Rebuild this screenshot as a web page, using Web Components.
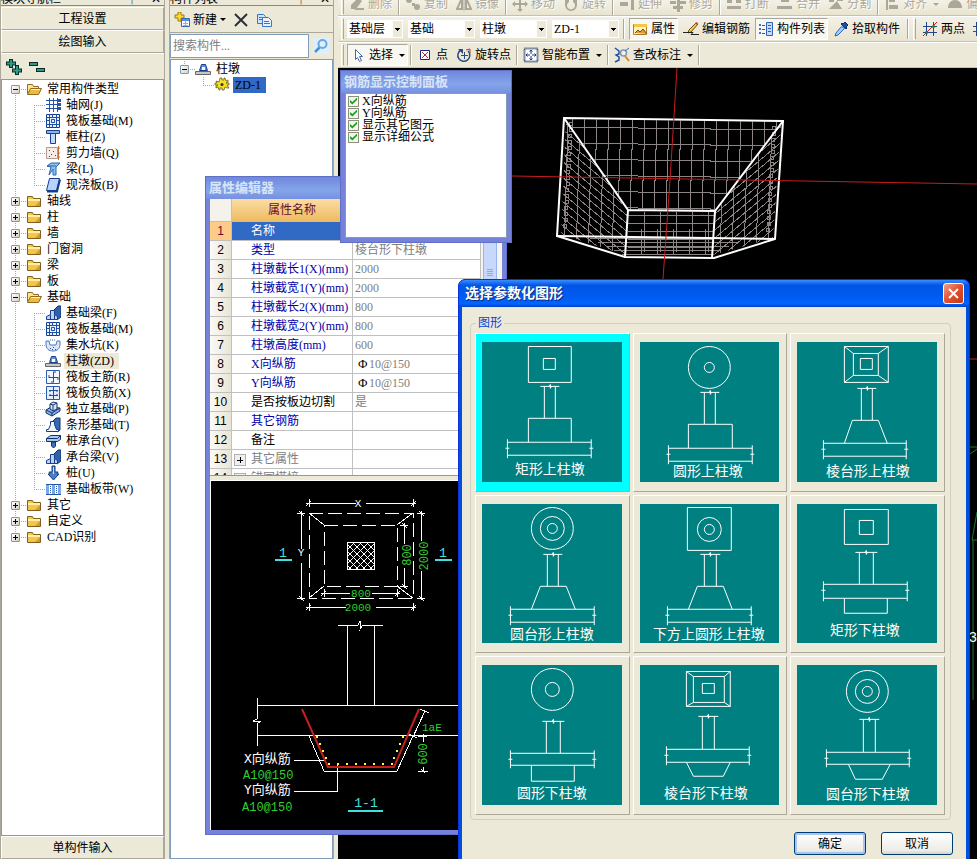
<!DOCTYPE html>
<html lang="zh-CN">
<head>
<meta charset="UTF-8">
<meta name="viewport" content="width=device-width, initial-scale=1">
<title>选择参数化图形</title>
<style>
    :root {
        --face: #ece9d8;
        --line: #aca899;
        --field-border: #7f9db9;
        --select: #316ac5;
    }
    body {
        margin: 0;
        font: 12px/16px "Liberation Serif", "Noto Sans CJK SC", sans-serif;
        color: #000;
    }
    /* floating windows on the desktop */
    .property-window { position: absolute; left: 205px; top: 176px; bottom: 24px; width: 302px; z-index: 1; }
    .rebar-window { position: absolute; left: 340px; top: 70px; width: 172px; height: 173px; z-index: 2; }
    .shape-window { position: absolute; left: 458px; top: 279px; width: 512px; z-index: 3; }
</style>
</head>
<body>
<app-workspace>
    <side-panel slot="nav" heading="模块导航栏">
        <nav-button slot="top">工程设置</nav-button>
        <nav-button slot="top">绘图输入</nav-button>
        <tree-tools slot="top"></tree-tools>
        <tree-view>
            <tree-item label="常用构件类型" icon="folderOpen" open>
                <tree-item label="轴网(J)" icon="axis"></tree-item>
                <tree-item label="筏板基础(M)" icon="raft"></tree-item>
                <tree-item label="框柱(Z)" icon="column"></tree-item>
                <tree-item label="剪力墙(Q)" icon="wall"></tree-item>
                <tree-item label="梁(L)" icon="beam"></tree-item>
                <tree-item label="现浇板(B)" icon="slab"></tree-item>
            </tree-item>
            <tree-item label="轴线" icon="folder" closed></tree-item>
            <tree-item label="柱" icon="folder" closed></tree-item>
            <tree-item label="墙" icon="folder" closed></tree-item>
            <tree-item label="门窗洞" icon="folder" closed></tree-item>
            <tree-item label="梁" icon="folder" closed></tree-item>
            <tree-item label="板" icon="folder" closed></tree-item>
            <tree-item label="基础" icon="folderOpen" open>
                <tree-item label="基础梁(F)" icon="foundBeam"></tree-item>
                <tree-item label="筏板基础(M)" icon="raft"></tree-item>
                <tree-item label="集水坑(K)" icon="pit"></tree-item>
                <tree-item label="柱墩(ZD)" icon="pier" current></tree-item>
                <tree-item label="筏板主筋(R)" icon="mainBar"></tree-item>
                <tree-item label="筏板负筋(X)" icon="negBar"></tree-item>
                <tree-item label="独立基础(P)" icon="isolated"></tree-item>
                <tree-item label="条形基础(T)" icon="strip"></tree-item>
                <tree-item label="桩承台(V)" icon="pileCap"></tree-item>
                <tree-item label="承台梁(V)" icon="foundBeam"></tree-item>
                <tree-item label="桩(U)" icon="pile"></tree-item>
                <tree-item label="基础板带(W)" icon="band"></tree-item>
            </tree-item>
            <tree-item label="其它" icon="folder" closed></tree-item>
            <tree-item label="自定义" icon="folder" closed></tree-item>
            <tree-item label="CAD识别" icon="folder" closed></tree-item>
        </tree-view>
        <nav-button slot="bottom">单构件输入</nav-button>
    </side-panel>

    <side-panel slot="list" heading="构件列表">
        <list-tools slot="top"></list-tools>
        <tree-view>
            <tree-item label="柱墩" icon="pier" open>
                <tree-item label="ZD-1" icon="gear" selected></tree-item>
            </tree-item>
        </tree-view>
    </side-panel>

    <main-toolbars slot="tools"></main-toolbars>
    <model-view slot="view"></model-view>

    <float-window slot="windows" class="property-window" heading="属性编辑器">
        <property-grid></property-grid>
        <section-preview></section-preview>
    </float-window>

    <float-window slot="windows" class="rebar-window" heading="钢筋显示控制面板">
        <check-list>
            <check-row>X向纵筋</check-row>
            <check-row>Y向纵筋</check-row>
            <check-row>显示其它图元</check-row>
            <check-row>显示详细公式</check-row>
        </check-list>
    </float-window>

    <float-window slot="windows" class="shape-window" heading="选择参数化图形" active>
        <shape-picker></shape-picker>
    </float-window>
</app-workspace>

<script>
const ICONS = {
    folder: '<path d="M1.5 3.5h5l1 2h7v8h-13z" fill="#f3c548" stroke="#7d6022"/><path d="M2 6h12v2H2z" fill="#fff0a8"/><path d="M9 13l5-5v5z" fill="#d89a28"/>',
    folderOpen: '<path d="M1.5 12.5v-9h5l1 2h5v3" fill="#ffe792" stroke="#8d6b28"/><path d="M1.5 13.5l3-6h11l-3 6z" fill="#f1b93c" stroke="#8d6b28"/><path d="M5 8.500h9" stroke="#fff2b5"/>',
    axis: '<path d="M1 3.500h14M1 7.500h14M1 11.500h14M4.500 1v14M8.500 1v14M12.500 1v14" stroke="#2454a8" fill="none"/><path d="M13 2h3v3h-3zM13 6h3v3h-3zM13 10h3v3h-3z" fill="#2454a8"/>',
    raft: '<path d="M1.500 1.500h13v13h-13z" fill="#eaf2ff" stroke="#123e90"/><path d="M1 4.500h14M1 11.500h14M4.500 1v14M11.500 1v14M7.500 1v3M7.500 12v3M1 7.500h3M12 7.500h3" stroke="#1b4fa8"/><path d="M6.500 6.500h3v3h-3z" fill="none" stroke="#1b4fa8"/>',
    column: '<path d="M1.500 1.500h13v3h-13z" fill="#8ab4f0" stroke="#173f91"/><path d="M5.500 4.500h5v10h-5z" fill="#c4dafb" stroke="#173f91"/>',
    wall: '<path d="M1.500 2.500h11v11h-11z" fill="#f6ebe6" stroke="#b59a92"/><path d="M4 5h1v1H4zM8 6h1v1H8zM6 9h1v1H6zM10 10h1v1h-1zM4 11h1v1H4z" fill="#a02020"/><path d="M13.500 1v14M13 3h2M13 8h2M13 12h2" stroke="#c07030"/>',
    beam: '<path d="M2 5l4-3h9l-4 4v8H8V8L4 14l2-8z" fill="#8fc0e8" stroke="#2866b4"/><path d="M2 5h9" stroke="#2866b4"/>',
    slab: '<path d="M4.500 1.500h10l-3 12h-10z" fill="#b8d3fb" stroke="#153e91"/><path d="M2 14.500h10l3-12" fill="none" stroke="#153e91" stroke-width="2"/>',
    foundBeam: '<path d="M8 6l5-5h3v11l-4 3z" fill="#2e62ad" stroke="#12336f"/><path d="M1.500 14.500v-3l4-2v-4h4v4l3 2v3z" fill="#b9d2f5" stroke="#173f91"/><path d="M5.500 10v4M9.500 10v4" stroke="#173f91"/>',
    pit: '<path d="M1 4h3l1 4h6l1-4h3v3c0 5-3 7-7 7s-7-2-7-7z" fill="#dbe7f8" stroke="#4b7bc0"/><path d="M5 3h6" stroke="#3c6cb8" stroke-dasharray="1 1"/><path d="M5 11h1v1H5zM8 10h1v1H8zM10 12h1v1h-1zM7 12h1v1H7z" fill="#2d57a0"/>',
    pier: '<path d="M6.500 3.500h4l2 6h-8z" fill="#5f90d8" stroke="#173f91"/><path d="M7 6h3v3H7z" fill="#fff"/><path d="M.500 10.500h15v3H.500z" fill="#c8c8c8" stroke="#666"/>',
    mainBar: '<path d="M1.500 1.500h13v13h-13z" fill="#f2f7ff" stroke="#2b5bb0"/><path d="M4 8.500h9M8.500 3v10M4 6v3M13 8v3M8 3h3M6 13h3" stroke="#1f4e9e"/>',
    negBar: '<path d="M1.500 1.500h13v13h-13z" fill="#e4eefc" stroke="#2b5bb0"/><path d="M4 5.500h9M4 10.500h9M8.500 2v12M5 5v2M12 5v2M5 9v2M12 9v2" stroke="#1f4e9e"/>',
    isolated: '<path d="M1 9l5-3 9 1v3l-8 5-6-3z" fill="#8cb2e8" stroke="#12336f"/><path d="M5 3l3-2 4 1v6l-4 2-3-2z" fill="#d4e4fb" stroke="#12336f"/><path d="M8 4v6M1 9l6 3 8-5M7 12v3M5 3l3 1 4-2" fill="none" stroke="#12336f"/>',
    strip: '<path d="M8 4l3-3h4v12l-3 2z" fill="#356ab5" stroke="#12336f"/><path d="M1.500 14.500v-2h2l2-5v-3h4v3l2 5h2v2z" fill="#eef5ff" stroke="#173f91"/>',
    pileCap: '<path d="M1.500 5.500l4-3h10v4l-3 2h-11z" fill="#a8c7f2" stroke="#12336f"/><path d="M1.500 5.500h11l3-3" fill="none" stroke="#12336f"/><path d="M6.500 9h4v4l-2 2-2-2z" fill="#3d70ba" stroke="#12336f"/>',
    pile: '<path d="M7 1h3v6h3l-1 2h2l-5.500 6L3 9h2L4 7h3z" fill="#4d7ec4" stroke="#143b80"/><path d="M8 2h1v7H8z" fill="#cfe0fa"/>',
    band: '<path d="M1 3.500h15M1 13.500h15" stroke="#2454a8"/><path d="M1 4h3v9H1zM7 4h3v9H7zM13 4h3v9h-3z" fill="#7ca7e4"/><path d="M5.500 5v8M11.500 5v8" stroke="#2454a8" stroke-dasharray="1 1"/>',
    gear: '<path d="M6 1h2v2h2V1h1l1 3 2-1v2l-2 1h3v2h-2l2 3h-2l-2-1-1 3H8v-2H6v2H5l-1-3-2 1V9l2-1H1V6h2L2 4l3 1z" fill="#f5e228" stroke="#5c5200" stroke-width=".7"/><circle cx="8" cy="7.500" r="1.500" fill="#333"/>',
    create: '<path d="M4 0h3v3h3v3H7v3H4V6H1V3h3z" fill="#ffd938" stroke="#a07800"/><path d="M7.500 6.500h8v8h-8z" fill="#fff" stroke="#3b68b5"/><path d="M8 7h7v2H8z" fill="#5b8ee0"/><path d="M9 11.500h5M9 13.500h5M11.500 9v5" stroke="#8fb0e6"/>',
    remove: '<path d="M2 2l12 12M14 2L2 14" stroke="#2c3038" stroke-width="2" fill="none"/>',
    copy: '<path d="M1.500 2.500h6l2 2v7h-8z" fill="#cfe4fc" stroke="#3877c4"/><path d="M6.500 5.500h6l3 3v6h-9z" fill="#e6f2ff" stroke="#3877c4"/><path d="M3 5.500h3M3 7.500h3M8 9.500h5M8 11.500h6" stroke="#3877c4"/>',
    search: '<circle cx="9.500" cy="6" r="4" fill="#d9f0ff" stroke="#6aa8dc" stroke-width="2"/><path d="M6.500 9.500L2 14" stroke="#4a8fd0" stroke-width="2.500"/>',
    expand: '<path d="M5 0v9M0 4.500h10" stroke="#0a2c28" stroke-width="4"/><path d="M11 6v10M6 11.500h10" stroke="#0a2c28" stroke-width="4"/><path d="M5 1v7M1 4.500h8M11 7v8M7 11.500h8" stroke="#2c9a86" stroke-width="2"/>',
    collapse: '<path d="M0 5h9M7 11h9" stroke="#0a2c28" stroke-width="4"/><path d="M1 5h7M8 11h7" stroke="#2c9a86" stroke-width="2"/>',
    property: '<path d="M1.500 3.500h5l1 2h7v8h-13z" fill="#fff4b8" stroke="#a38235"/><path d="M2 3h13v3H2z" fill="#f3c548"/><path d="M3 12l3-3 2 2 3-3 4 5" fill="#e69a3c" stroke="#73461e"/>',
    pencil: '<path d="M6 9l7-7 2 1-7 8-3 1z" fill="#f1cf52" stroke="#6b4a10"/><path d="M12 2l2-1 1 2-1 1z" fill="#d04040"/><path d="M0 11.500h10l-2 2h8" fill="none" stroke="#222"/>',
    list: '<path d="M1 3h2v2H1zM1 7h2v2H1zM1 11h2v2H1z" fill="#4577c5"/><path d="M4 4.500h3M4 8.500h3M4 12.500h3" stroke="#555"/><path d="M8.500 1.500h6v13h-6z" fill="#c4dafb" stroke="#2f61b4"/><path d="M10 4.500h3M10 7.500h3M10 10.500h3" stroke="#2f61b4"/>',
    dropper: '<path d="M10 3l2-2 3 3-2 2 1 1-1 1-5-5 1-1z" fill="#1c4fa8" stroke="#0f2e6e"/><path d="M8.500 5.500l3 2L5 14l-3 1 1-3z" fill="#9fd0ff" stroke="#2b64b8"/>',
    twoPoint: '<path d="M4.500 1v14M11.500 1v14M1 5.500h14M1 11.500h14" stroke="#1b4790"/><path d="M1 15L15 1" stroke="#c02020"/><circle cx="4.500" cy="11.500" r="1.500" fill="#287a28"/><circle cx="11.500" cy="5.500" r="1.500" fill="#287a28"/>',
    parallel: '<path d="M4.500 1v14M11.500 1v14M1 5.500h14" stroke="#1b4790"/><path d="M1 10.500h14" stroke="#c02020"/>',
    cursor: '<path d="M5.500 2.500v10l2-2 2 4 2-1-2-4h3z" fill="#fff" stroke="#4a66a0"/>',
    point: '<path d="M3.500 3.500h9v9h-9z" fill="#fff" stroke="#152d78"/><path d="M5 5l6 6M11 5l-6 6" stroke="#b02040"/>',
    rotatePoint: '<path d="M5 3a6 6 0 1 0 7 1" fill="none" stroke="#2d4a80" stroke-width="1.500"/><path d="M2 2h5v5z" fill="#2d4a80"/><path d="M8.500 5v7M5 8.500h7" stroke="#2d4a80"/><path d="M10 3l4-1v4" fill="none" stroke="#c03030"/>',
    smart: '<path d="M1.500 1.500h13v13h-13z" fill="#fff" stroke="#152d58" stroke-width="2" stroke-dasharray="1 1"/><path d="M8 3v4M8 9v4M3 8h4M9 8h4" stroke="#17377c"/><path d="M6.500 4.500L8 3l1.500 1.500M6.500 11.500L8 13l1.500-1.500M4.500 6.500L3 8l1.500 1.500M11.500 6.500L13 8l-1.500 1.500" fill="none" stroke="#17377c"/>',
    inspect: '<path d="M1 1l4 3v3L2 8l3 2v3l-4 2" fill="none" stroke="#1f4fa8" stroke-width="1.500"/><circle cx="9.500" cy="6" r="3" fill="#e4f4ff" stroke="#8a97a8" stroke-width="1.500"/><path d="M11 9l4 5" stroke="#d08a28" stroke-width="2"/><path d="M11 4l4-3" stroke="#2f6cc0"/>',
    gErase: '<path d="M2 9l7-7 4 3-6 8H2z"/><path d="M8 12h7v2H5z"/>',
    gCopy: '<circle cx="4" cy="4" r="3"/><path d="M7 7h3v3H7z"/><circle cx="12" cy="11" r="3"/>',
    gMirror: '<path d="M6 2v11H1zM10 2v11h5z" fill="none" stroke="#aca899" stroke-width="2"/><path d="M8 0v15" stroke="#aca899"/>',
    gMove: '<path d="M8 0l3 3H9v4h4V5l3 3-3 3V9H9v4h2l-3 3-3-3h2V9H3v2L0 8l3-3v2h4V3H5z"/>',
    gRotate: '<path d="M2 3h4v3a4 4 0 1 0 4 0V3h4v6a6 6 0 0 1-12 0z"/>',
    gExtend: '<path d="M1 6h8v4H1zM12 1h3v13h-3z"/>',
    gTrim: '<path d="M0 5h6v3H0zM10 5h6v3h-6zM3 10h10v3H3zM7 2h3v14H7z"/>',
    gBreak: '<path d="M1 4h5v3H1zM10 4h5v3h-5zM1 10h14v3H1z"/>',
    gMerge: '<path d="M4 3h8v3H4zM0 10h15v3H0z"/>',
    gSplit: '<path d="M1 2h5v4H1zM9 2h6v3H9zM1 13l8-8 5 8z"/>',
    gAlign: '<path d="M2 1h2v13H2zM5 3h6v3H5zM5 9h9v4H5z"/>',
    gOffset: '<path d="M1 12c0-5 3-8 7-8s7 3 7 8z"/>'
};

// Shared helper: fills an open shadow root
class BaseElement extends HTMLElement {
    constructor() {
        super();
        this.attachShadow({ mode: 'open' });
    }

    connectedCallback() {
        this.render();
    }

    paint(css, html) {
        this.shadowRoot.innerHTML = `
            <style>
                * { box-sizing: border-box; }
                button, input, select { font: inherit; color: inherit; margin: 0; }
                ${css}
            </style>
            ${html}
        `;
    }
}

class UiIcon extends BaseElement {
    render() {
        this.paint(`
            :host { display: block; flex: none; width: 16px; height: 16px; }
            svg { display: block; fill: #aca899; }
        `, `<svg width="16" height="16" viewBox="0 0 16 16" aria-hidden="true">${ICONS[this.getAttribute('name')] || ''}</svg>`);
    }
}

class AppWorkspace extends BaseElement {
    render() {
        this.paint(`
            :host {
                display: grid;
                position: relative;
                grid-template-columns: 165px 165px minmax(0, 1fr);
                grid-template-rows: auto minmax(0, 1fr);
                column-gap: 4px;
                height: 100vh;
                overflow: hidden;
                background: var(--face);
            }
            slot[name="nav"]::slotted(*), slot[name="list"]::slotted(*) { grid-row: 1 / 3; }
            slot[name="tools"]::slotted(*) { grid-column: 3; grid-row: 1; }
            slot[name="view"]::slotted(*) { grid-column: 3; grid-row: 2; }
        `, `
            <slot name="nav"></slot>
            <slot name="list"></slot>
            <slot name="tools"></slot>
            <slot name="view"></slot>
            <slot name="windows"></slot>
        `);
    }
}

class SidePanel extends BaseElement {
    render() {
        this.paint(`
            :host {
                display: flex;
                flex-direction: column;
                min-height: 0;
                border-right: 1px solid var(--line);
                border-left: 1px solid var(--line);
            }
            header {
                display: flex;
                align-items: flex-end;
                gap: 10px;
                flex: none;
                height: 6px;
                line-height: 12px;
                overflow: hidden;
                border-bottom: 1px solid #8c8878;
                margin-bottom: 1px;
            }
            header span { flex: 1; }
            header i { font-style: normal; padding-right: 3px; }
            .body {
                flex: 1;
                min-height: 0;
                background: #fff;
                border: 1px solid var(--field-border);
            }
        `, `
            <header><span>${this.getAttribute('heading')}</span><i>┿</i><i>✕</i></header>
            <slot name="top"></slot>
            <div class="body"><slot></slot></div>
            <slot name="bottom"></slot>
        `);
    }
}

class NavButton extends BaseElement {
    render() {
        this.paint(`
            :host { display: block; flex: none; }
            button {
                display: block;
                width: 100%;
                height: 23px;
                padding: 0;
                background: var(--face);
                border: 1px solid;
                border-color: #fff var(--line) var(--line) #fff;
            }
        `, '<button type="button"><slot></slot></button>');
    }
}

class TreeTools extends BaseElement {
    render() {
        this.paint(`
            :host { display: flex; align-items: center; gap: 7px; flex: none; height: 25px; padding-left: 5px; border-top: 1px solid #fff; }
            button { padding: 0; border: 0; background: none; }
        `, `
            <button type="button" aria-label="展开"><ui-icon name="expand"></ui-icon></button>
            <button type="button" aria-label="折叠"><ui-icon name="collapse"></ui-icon></button>
        `);
    }
}

class ListTools extends BaseElement {
    render() {
        this.paint(`
            :host { display: block; flex: none; }
            .tools { display: flex; align-items: center; gap: 7px; height: 26px; padding: 0 4px; border-bottom: 1px solid var(--line); }
            button { display: flex; align-items: center; gap: 3px; padding: 0; border: 0; background: none; }
            .arrow { border: 3px solid transparent; border-top-color: #000; border-bottom: 0; }
            .search { display: flex; align-items: center; height: 26px; }
            input {
                flex: 1;
                min-width: 0;
                height: 24px;
                padding: 0 2px;
                background: #fff;
                border: 1px solid var(--field-border);
            }
            input::placeholder { color: #808080; opacity: 1; }
            .search button { margin: 0 4px; background: #dcefff; }
        `, `
            <div class="tools">
                <button type="button"><ui-icon name="create"></ui-icon>新建<span class="arrow"></span></button>
                <button type="button" aria-label="删除"><ui-icon name="remove"></ui-icon></button>
                <button type="button" aria-label="复制"><ui-icon name="copy"></ui-icon></button>
            </div>
            <div class="search">
                <input type="text" placeholder="搜索构件..." aria-label="搜索构件">
                <button type="button" aria-label="搜索"><ui-icon name="search"></ui-icon></button>
            </div>
        `);
    }
}

class TreeView extends BaseElement {
    render() {
        this.paint(':host { display: block; padding: 1px 0 0 9px; }', '<slot></slot>');
    }
}

class TreeItem extends BaseElement {
    render() {
        const open = this.hasAttribute('open');
        const branch = open || this.hasAttribute('closed');
        this.paint(`
            :host {
                display: block;
                background: repeating-linear-gradient(#a8a8a8 0 1px, transparent 1px 2px) 4px 0 / 1px 100% no-repeat;
            }
            :host(:first-child) { background-position: 4px 8px; }
            :host(:last-child) { background-position: 4px 0; background-size: 1px 8px; }
            .row {
                display: flex;
                align-items: center;
                height: 16px;
                background: repeating-linear-gradient(90deg, #a8a8a8 0 1px, transparent 1px 2px) 4px 8px / 12px 1px no-repeat;
            }
            button {
                flex: none;
                width: 9px;
                height: 9px;
                padding: 0;
                border: 1px solid #7898b5;
                border-radius: 1px;
                background:
                    linear-gradient(#000, #000) center / 5px 1px no-repeat,
                    ${open ? '' : 'linear-gradient(#000, #000) center / 1px 5px no-repeat,'}
                    linear-gradient(135deg, #fff, #d5cfc0);
            }
            .gap { flex: none; width: ${branch ? 6 : 15}px; }
            .label { margin-left: 3px; padding: 0 2px; white-space: nowrap; }
            :host([current]) .label { background: var(--face); padding-right: 5px; }
            :host([selected]) .label { background: var(--select); padding-right: 5px; }
            .kids { margin-left: 19px; }
        `, `
            <div class="row">
                ${branch ? '<button type="button" aria-label="展开或折叠"></button>' : ''}<span class="gap"></span>
                <ui-icon name="${this.getAttribute('icon')}"></ui-icon>
                <span class="label">${this.getAttribute('label')}</span>
            </div>
            <div class="kids"><slot></slot></div>
        `);
    }
}

class ToolButton extends BaseElement {
    render() {
        const icon = this.getAttribute('icon');
        this.paint(`
            :host { display: block; flex: none; }
            button {
                display: flex;
                align-items: center;
                gap: 3px;
                height: 22px;
                padding: 0 2px;
                border: 1px solid transparent;
                background: none;
                white-space: nowrap;
            }
            :host([checked]) button {
                background: #f8f7f1;
                border-color: var(--line) #fff #fff var(--line);
            }
            button:disabled { color: #aca899; text-shadow: 1px 1px #fff; }
            .arrow { border: 3px solid transparent; border-top-color: currentColor; border-bottom: 0; margin-left: 3px; }
        `, `
            <button type="button" ${this.hasAttribute('disabled') ? 'disabled' : ''}>
                <ui-icon name="${icon}"></ui-icon><slot></slot>
                ${this.hasAttribute('menu') ? '<span class="arrow"></span>' : ''}
            </button>
        `);
    }
}

class ComboBox extends BaseElement {
    render() {
        this.paint(`
            :host { display: block; flex: none; }
            select {
                display: block;
                width: 100%;
                height: 18px;
                padding: 0 0 0 2px;
                border: 0;
                border-radius: 0;
                appearance: none;
                background:
                    linear-gradient(#000, #000) right 3px top 8px / 5px 1px no-repeat,
                    linear-gradient(#000, #000) right 4px top 9px / 3px 1px no-repeat,
                    linear-gradient(#000, #000) right 5px top 10px / 1px 1px no-repeat,
                    linear-gradient(var(--face), var(--face)) right 1px center / 9px 16px no-repeat,
                    #fff;
            }
        `, `<select aria-label="${this.getAttribute('name')}"><option>${this.getAttribute('value')}</option></select>`);
    }
}

class MainToolbars extends BaseElement {
    render() {
        const off = (icon, text, extra = '') => `<tool-button disabled icon="${icon}" ${extra}>${text}</tool-button>`;
        this.paint(`
            :host { display: block; min-width: 0; overflow: hidden; }
            .bar {
                display: flex;
                align-items: center;
                height: 26px;
                padding-left: 3px;
                overflow: hidden;
                border-top: 1px solid #fff;
                border-bottom: 1px solid #c5c2b2;
                background: linear-gradient(#f3f1e6, #e8e4d0);
            }
            .top { height: 16px; align-items: flex-end; border-top: 0; gap: 3px; }
            .top tool-button { margin-left: -1px; }
            .grip { flex: none; width: 3px; height: 22px; margin-right: 3px; border: 1px solid; border-color: #fff var(--line) #fff #fff; }
            .sep { flex: none; width: 2px; height: 20px; margin: 0 4px; border-left: 1px solid var(--line); border-right: 1px solid #fff; }
            .top .sep { margin: 0; }
            .top .grip { margin: 0; }
            .combos { display: flex; gap: 5px; }
            .w1 { width: 56px; }
            .w2 { width: 67px; }
            .props { display: flex; gap: 2px; }
            .mode { display: flex; gap: 1px; width: max-content; padding-right: 5px; }
            .last { background: none; }
            .last .sep { margin: 0 2px; }
        `, `
            <div class="bar top">
                <span class="grip"></span>
                ${off('gErase', '删除')}<span class="sep"></span>
                ${off('gCopy', '复制')}${off('gMirror', '镜像')}<span class="sep"></span>
                ${off('gMove', '移动')}${off('gRotate', '旋转')}<span class="sep"></span>
                ${off('gExtend', '延伸')}${off('gTrim', '修剪')}<span class="sep"></span>
                ${off('gBreak', '打断')}${off('gMerge', '合并')}${off('gSplit', '分割')}<span class="sep"></span>
                ${off('gAlign', '对齐', 'menu')}${off('gOffset', '偏移')}
            </div>
            <div class="bar">
                <span class="grip"></span>
                <div class="combos">
                    <combo-box class="w1" name="楼层" value="基础层"></combo-box>
                    <combo-box class="w2" name="类别" value="基础"></combo-box>
                    <combo-box class="w2" name="类型" value="柱墩"></combo-box>
                    <combo-box class="w2" name="构件" value="ZD-1"></combo-box>
                </div>
                <span class="sep"></span>
                <div class="props">
                    <tool-button icon="property" checked>属性</tool-button>
                    <tool-button icon="pencil">编辑钢筋</tool-button>
                    <tool-button icon="list" checked>构件列表</tool-button>
                    <tool-button icon="dropper">拾取构件</tool-button>
                </div>
                <span class="sep"></span>
                <span class="grip"></span>
                <div class="mode">
                    <tool-button icon="twoPoint">两点</tool-button>
                    <tool-button icon="parallel">平行</tool-button>
                </div>
            </div>
            <div class="bar last">
                <span class="grip"></span>
                <tool-button icon="cursor" checked menu>选择</tool-button>
                <span class="sep"></span>
                <div class="props">
                    <tool-button icon="point">点</tool-button>
                    <tool-button icon="rotatePoint">旋转点</tool-button>
                </div>
                <span class="sep"></span>
                <tool-button icon="smart" menu>智能布置</tool-button>
                <span class="sep"></span>
                <tool-button icon="inspect" menu>查改标注</tool-button>
                <span class="sep"></span>
            </div>
        `);
    }
}

class ModelView extends BaseElement {
    // Rebar mesh, one group of lines for each face of the pier
    mesh() {
        let back = '';
        for (let x = 573; x < 780; x += 12) back += `M${x} 119L${x - 3} 212`;
        for (let y = 127; y < 212; y += 16) back += `M566 ${y}L782 ${y + 3}`;
        let left = '';
        for (let x = 568; x < 628; x += 12) left += `M${x} 120L${x - 4} 258`;
        for (let y = 60; y < 250; y += 8) left += `M556 ${y}L630 ${y + 62}`;
        let right = '';
        for (let x = 724; x < 784; x += 12) right += `M${x} 120L${x - 4} 258`;
        for (let y = 60; y < 250; y += 8) right += `M784 ${y}L710 ${y + 62}`;
        let front = '';
        for (let x = 641; x < 712; x += 16) front += `M${x} 229V254M${x + 3} 212V252`;
        for (let y = 215; y < 255; y += 8) front += `M628 ${y}H714`;
        let floor = '';
        for (let y = 238; y < 256; y += 4) floor += `M${590 + (y - 238) * 2} ${y}H${745 - (y - 238) * 2}`;
        let hooks = '';
        for (let y = 124; y < 232; y += 6) {
            const shift = Math.round((y - 124) / 18);
            hooks += `<circle cx="${571 - shift}" cy="${y}" r="2"/><circle cx="${774 - shift}" cy="${y + 4}" r="2"/>`;
        }
        return `
            <path d="${back}" clip-path="url(#back)"/>
            <path d="${left}" clip-path="url(#left)"/>
            <path d="${right}" clip-path="url(#right)"/>
            <path d="${front}${floor}"/>
            ${hooks}
        `;
    }

    render() {
        this.paint(`
            :host { display: block; min-height: 0; background: #000; overflow: hidden; }
            svg { display: block; width: 100%; height: 100%; fill: none; }
            text { font: 14px "Liberation Sans", sans-serif; fill: #fff; }
        `, `
            <svg>
                <defs>
                    <clipPath id="back"><path d="M566 119L782 122 715 210H628z"/></clipPath>
                    <clipPath id="left"><path d="M566 122L628 212 625 255 561 234z"/></clipPath>
                    <clipPath id="right"><path d="M781 124L715 213 713 255 773 238z"/></clipPath>
                </defs>
                <g transform="translate(-338 -68)">
                    <g stroke="#8c8482" shape-rendering="crispEdges">${this.mesh()}</g>
                    <g stroke="#fff" stroke-width="2">
                        <path d="M564 118L783 121 775 239 714 258 625 257 557 236z"/>
                        <path d="M564 118L628 210 715 211 783 121M628 210L625 257M715 211L712 258M557 236L775 239"/>
                    </g>
                    <g stroke="#c81c1c">
                        <path d="M677 68L670 180 663 279"/>
                        <path d="M512 176L977 184M960 359H977"/>
                    </g>
                    <path d="M960 447H977M970 454L977 449M977 512L972 540H977M973 540V700" stroke="#1c7a28"/>
                    <text x="969" y="642">3</text>
                </g>
            </svg>
        `);
    }
}

class FloatWindow extends BaseElement {
    render() {
        const active = this.hasAttribute('active');
        this.paint(`
            :host {
                display: flex;
                flex-direction: column;
                box-sizing: border-box;
                padding: 0 4px 4px;
                background: #7582d8;
                border: 1px solid #6070c8;
            }
            header {
                display: flex;
                align-items: center;
                justify-content: space-between;
                flex: none;
                height: 22px;
                margin: 0 -4px;
                padding-left: 3px;
                background: linear-gradient(#6f88dc, #84a4ea 60%, #7790e0);
                color: #d8e4f8;
                font-size: 13px;
                font-weight: bold;
            }
            .content { display: flex; flex-direction: column; flex: 1; min-height: 0; background: var(--face); }
            :host([active]) {
                padding: 0 3px 3px;
                background: #0050e0;
                border-color: #0831d9;
                border-radius: 7px 7px 0 0;
            }
            :host([active]) header {
                height: 27px;
                margin: 0 -3px;
                padding: 0 5px 0 6px;
                border-radius: 6px 6px 0 0;
                background: linear-gradient(#3c8cff, #0055e6 20%, #005af0 60%, #0064ff 88%, #0040c8);
                color: #fff;
                font-size: 14px;
                text-shadow: 1px 1px #0a2a80;
            }
            button {
                width: 21px;
                height: 21px;
                padding: 0;
                border: 1px solid #fff;
                border-radius: 3px;
                background: linear-gradient(135deg, #f0a088, #e05030 50%, #c03810);
            }
            svg { display: block; margin: auto; }
        `, `
            <header>
                <span>${this.getAttribute('heading')}</span>
                ${active ? '<button type="button" aria-label="关闭"><svg width="13" height="13"><path d="M2 2l9 9M11 2l-9 9" stroke="#fff" stroke-width="2"/></svg></button>' : ''}
            </header>
            <div class="content"><slot></slot></div>
        `);
    }
}

const PROPERTIES = [
    ['名称', 'ZD-1', 'name'],
    ['类型', '棱台形下柱墩', 'key'],
    ['柱墩截长1(X)(mm)', '2000', 'key'],
    ['柱墩截宽1(Y)(mm)', '2000', 'key'],
    ['柱墩截长2(X)(mm)', '800', 'key'],
    ['柱墩截宽2(Y)(mm)', '800', 'key'],
    ['柱墩高度(mm)', '600', 'key'],
    ['X向纵筋', '<b>Ф</b>10@150', 'key'],
    ['Y向纵筋', '<b>Ф</b>10@150', 'key'],
    ['是否按板边切割', '是', ''],
    ['其它钢筋', '', 'key'],
    ['备注', '', ''],
    ['其它属性', '', 'group'],
    ['锚固搭接', '', 'group']
];

class PropertyGrid extends BaseElement {
    render() {
        const rows = PROPERTIES.map(([name, value, kind], i) => `
            <tr class="${kind}">
                <th scope="row">${i + 1}</th>
                <td>${kind === 'group' ? '<button type="button" aria-label="展开"></button>' : ''}${name}</td>
                <td class="value">${value}</td>
            </tr>`).join('');
        this.paint(`
            :host { display: flex; flex: none; height: 276px; margin-bottom: 4px; border-bottom: 1px solid var(--field-border); background: #fff; }
            .scroll { flex: 1; overflow: hidden; }
            table { width: 100%; table-layout: fixed; border-collapse: separate; border-spacing: 0; }
            th, td { height: 19px; padding: 0; border: solid #c0c0c0; border-width: 0 1px 1px 0; white-space: nowrap; overflow: hidden; line-height: 18px; }
            td { padding-left: 19px; }
            thead th { height: 23px; font-weight: normal; background: linear-gradient(#fadda4, #eebb62); color: #6a0c2c; }
            .num { width: 22px; }
            .name { width: 121px; }
            th { font-weight: normal; background: linear-gradient(90deg, #fbfaf6, #e8e5d6); }
            tbody th { font-family: "Liberation Sans", sans-serif; }
            thead .num { background: #f4f2ea; }
            .key td { color: #0000a8; }
            .name td { color: #fff; background: var(--select); }
            .name th { background: #ffcb88; color: #6a0c2c; }
            .group td { color: #808080; padding-left: 2px; }
            tr .value { color: #808080; padding-left: 2px; }
            b { display: inline-block; width: 11px; margin-left: 3px; color: #000; font-weight: normal; }
            button {
                width: 12px;
                height: 12px;
                margin-right: 5px;
                padding: 0;
                vertical-align: middle;
                border: 1px solid #b0b0b0;
                background: linear-gradient(#000, #000) center / 6px 1px no-repeat, linear-gradient(#000, #000) center / 1px 6px no-repeat, #eee;
            }
            .bar { flex: none; width: 21px; padding: 0 5px 0 2px; background: #f4f3ee; }
            .thumb { height: 120px; border: 1px solid #98b4ee; border-radius: 2px; background: repeating-linear-gradient(#8ea8e0 0 1px, transparent 1px 2px) center 69px / 6px 8px no-repeat, #c8d8fc; }
        `, `
            <div class="scroll">
                <table>
                    <thead><tr><th class="num"></th><th class="name">属性名称</th><th>属性值</th></tr></thead>
                    <tbody>${rows}</tbody>
                </table>
            </div>
            <div class="bar"><div class="thumb"></div></div>
        `);
    }
}

class SectionPreview extends BaseElement {
    // dimension line with a tick at both ends
    dimH(x1, x2, y, gap) {
        const mid = Math.round((x1 + x2) / 2);
        return `<path d="M${x1 - 3} ${y}H${mid - gap}M${mid + gap} ${y}H${x2 + 3}M${x1} ${y - 4}v8M${x2} ${y - 4}v8M${x1 - 3} ${y + 3}l5-5M${x2 - 2} ${y + 3}l5-5"/>`;
    }

    dimV(x, y1, y2, gap) {
        const mid = Math.round((y1 + y2) / 2);
        return `<path d="M${x} ${y1 - 2}V${mid - gap}M${x} ${mid + gap}V${y2 + 2}M${x - 4} ${y1}h8M${x - 4} ${y2}h8M${x - 2} ${y1 - 2}l5 5M${x - 2} ${y2 - 2}l5 5"/>`;
    }

    render() {
        const dot = (x, y) => `<path d="M${x - 1} ${y - 1}h2v2h-2z"/>`;
        let dots = '';
        for (let x = 329; x <= 394; x += 9) dots += dot(x, 763);
        [[317, 736], [320, 743], [323, 750], [326, 757], [403, 736], [400, 743], [397, 750], [394, 757]].forEach(([x, y]) => {
            dots += dot(x, y);
        });
        this.paint(`
            :host { display: block; flex: 1; min-height: 0; background: #000; border: solid #fff; border-width: 1px 0 0 1px; overflow: hidden; }
            svg { display: block; width: 100%; height: 100%; }
            text { font: 12px "Liberation Mono", "Noto Sans CJK SC", monospace; text-anchor: middle; fill: #32cd32; }
            .w { fill: #fff; }
            .zh { font-size: 13px; fill: #fff; text-anchor: start; }
            .c { fill: #3fe0e0; font-size: 13px; }
            .s { text-anchor: start; }
            .d { font-size: 11px; }
        `, `
            <svg>
                <defs>
                    <pattern id="hatch" width="7" height="7" patternUnits="userSpaceOnUse">
                        <path d="M0 0l7 7M7 0L0 7" stroke="#fff"/>
                    </pattern>
                </defs>
                <g transform="translate(-211 -480)">
                    <g fill="none" stroke="#fff" shape-rendering="crispEdges">
                        ${this.dimH(309, 413, 502, 5)}
                        ${this.dimH(324, 397, 592, 11)}
                        ${this.dimH(309, 413, 606, 15)}
                        ${this.dimV(301, 512, 597, 7)}
                        ${this.dimV(404, 524, 585, 12)}
                        ${this.dimV(421, 512, 597, 15)}
                        <path d="M309 512H413V597H309zM324 524H397V585H324z" stroke-dasharray="14 5"/>
                        <path d="M309 512l15 12M413 512l-16 12M309 597l15-12M413 597l-16-12"/>
                        <path d="M347 541h27v27h-27z" fill="url(#hatch)"/>
                        <path d="M338 624h20l2-4v8l3-4h20M347 624v80M374 624v80"/>
                        <path d="M257 704h240M257 734h240M257 697v21l-4 2h8l-4 3v22"/>
                        <path d="M309 735L324 770H397L413 735"/>
                        <path d="M420 708l9 4M425 710L413 736M409 733l8 4M423 733v8M423 766v4M418 735h9M418 770h10M421 768l4 4"/>
                        <path d="M294 759h31M294 790h43v-27"/>
                    </g>
                    <path d="M302 708L328 766H394L419 708" fill="none" stroke="#c42020" stroke-width="2"/>
                    <g fill="#ffff40">${dots}</g>
                    <path d="M275 559h17M435 559h17M348 810h35" stroke="#3fe0e0" stroke-width="2"/>
                    <text class="w d" x="358" y="506">X</text>
                    <text class="w d" x="301" y="555">Y</text>
                    <text class="c" x="283" y="556">1</text>
                    <text class="c" x="443" y="556">1</text>
                    <text class="d" x="361" y="596">800</text>
                    <text class="d" x="358" y="610">2000</text>
                    <text x="407" y="558" transform="rotate(-90 407 554)">800</text>
                    <text x="424" y="559" transform="rotate(-90 424 555)">2000</text>
                    <text x="423" y="757" transform="rotate(-90 423 753)">600</text>
                    <text class="s d" x="422" y="730">1aE</text>
                    <text class="zh" x="244" y="762">X向纵筋</text>
                    <text class="s" x="243" y="778">A10@150</text>
                    <text class="zh" x="244" y="793">Y向纵筋</text>
                    <text class="s" x="242" y="810">A10@150</text>
                    <text class="c" x="366" y="806">1-1</text>
                </g>
            </svg>
        `);
    }
}

class CheckList extends BaseElement {
    render() {
        this.paint(`
            :host { display: block; flex: 1; padding: 1px 0 0 2px; background: #fff; border: 1px solid var(--field-border); }
        `, '<slot></slot>');
    }
}

class CheckRow extends BaseElement {
    render() {
        this.paint(`
            :host { display: block; }
            label { display: flex; align-items: center; gap: 3px; height: 12px; line-height: 12px; }
            input {
                appearance: none;
                flex: none;
                display: grid;
                place-items: center;
                width: 11px;
                height: 11px;
                border: 1px solid #8f8f80;
                background: #f4f4ee;
            }
            input:checked::before {
                content: "";
                width: 7px;
                height: 7px;
                background: #21a121;
                clip-path: polygon(0 35%, 35% 65%, 100% 0, 100% 35%, 35% 100%, 0 70%);
            }
        `, '<label><input type="checkbox" checked><slot></slot></label>');
    }
}

// Each thumbnail is 140 x 140. rects: x1,y1,x2,y2; circles: cx,cy,r;
// col: x1,x2,top,bottom; slab: x1,x2,top,bottom; foot: closed outline
const SHAPES = [
    { label: '矩形上柱墩', at: [68, 132], rects: [[46, 4, 89, 40], [61, 16, 73, 27]], circles: [], col: [62, 73, 44, 76], slab: [25, 109, 100, 113], foot: 'M46 100V76H89V100' },
    { label: '圆形上柱墩', at: [68, 134], rects: [], circles: [[69, 25, 21], [69, 25, 5]], col: [64, 75, 50, 82], slab: [28, 112, 106, 119], foot: 'M48 106V82H92V106' },
    { label: '棱台形上柱墩', at: [71, 134], rects: [[47, 4, 91, 40], [56, 11, 81, 33], [63, 16, 75, 27]], circles: [], corners: 'M47 4l9 7M91 4l-10 7M47 40l9-7M91 40l-10-7', col: [64, 75, 46, 78], slab: [26, 109, 101, 114], foot: 'M47 101L55 78H81L90 101' },
    { label: '圆台形上柱墩', at: [70, 135], rects: [], circles: [[70, 24, 21], [70, 24, 12], [70, 24, 5]], col: [65, 76, 50, 82], slab: [28, 112, 105, 118], foot: 'M49 105L58 82H84L93 105' },
    { label: '下方上圆形上柱墩', at: [69, 135], rects: [[47, 3, 91, 46]], circles: [[69, 25, 12], [69, 25, 5]], col: [64, 76, 50, 82], slab: [27, 111, 105, 118], foot: 'M48 105L57 82H83L92 105' },
    { label: '矩形下柱墩', at: [68, 131], rects: [[47, 5, 91, 40], [62, 16, 76, 30]], circles: [], col: [62, 76, 48, 80], slab: [26, 110, 80, 94], foot: 'M47 94V109H90V94' },
    { label: '圆形下柱墩', at: [70, 133], rects: [], circles: [[70, 24, 21], [70, 24, 7]], col: [64, 78, 56, 88], slab: [28, 112, 88, 100], foot: 'M49 100V116H92V100' },
    { label: '棱台形下柱墩', at: [66, 133], rects: [[46, 6, 90, 41], [53, 11, 84, 37], [62, 18, 74, 28]], circles: [], corners: 'M46 6l7 5M90 6l-6 5M46 41l7-4M90 41l-6-4', col: [62, 74, 51, 84], slab: [26, 109, 84, 97], foot: 'M46 97L53 111H83L90 97' },
    { label: '圆台形下柱墩', at: [71, 134], rects: [], circles: [[70, 26, 21], [70, 26, 12], [70, 26, 5]], col: [66, 78, 54, 87], slab: [29, 112, 87, 99], foot: 'M51 99L58 114H85L93 99' }
];

class ShapeCard extends BaseElement {
    render() {
        const s = SHAPES[Number(this.getAttribute('index'))];
        const [c1, c2, ct, cb] = s.col;
        const [s1, s2, st, sb] = s.slab;
        const mid = Math.round((c1 + c2) / 2);
        const rects = s.rects.map(([x1, y1, x2, y2]) => `<path d="M${x1} ${y1}H${x2}V${y2}H${x1}z"/>`).join('');
        const circles = s.circles.map(([x, y, r]) => `<circle cx="${x}" cy="${y}" r="${r}"/>`).join('');
        this.paint(`
            :host { display: block; }
            button {
                display: block;
                width: 100%;
                padding: 8px 7px 9px 6px;
                background: var(--face);
                border: 1px solid;
                border-color: #fff var(--line) var(--line) #fff;
            }
            :host([selected]) button { background: #00ffff; }
            svg { display: block; width: 100%; background: #008080; }
            text { font: 14px "Liberation Sans", "Noto Sans CJK SC", sans-serif; text-anchor: middle; fill: #fff; }
        `, `
            <button type="button">
                <svg viewBox="0 0 140 140">
                    <g transform="translate(.5 .5)" fill="none" stroke="#fff">
                        ${rects}${circles}
                        <path d="${s.corners || ''}"/>
                        <path d="M${c1 - 4} ${ct}H${c2 + 4}M${mid - 1} ${ct}l1-2v4l1-2M${c1} ${ct}V${cb}M${c2} ${ct}V${cb}"/>
                        <path d="M${s1} ${st}H${s2}M${s1} ${sb}H${s2}M${s1} ${st - 3}V${sb + 3}M${s2} ${st - 3}V${sb + 3}"/>
                        <path d="M${s1 - 2} ${st + 6}h4M${s2 - 2} ${st + 6}h4"/>
                        <path d="${s.foot}"/>
                    </g>
                    <text x="${s.at[0]}" y="${s.at[1]}">${s.label}</text>
                </svg>
            </button>
        `);
    }
}

class ShapePicker extends BaseElement {
    render() {
        this.paint(`
            :host { display: block; padding: 8px 13px 8px 8px; }
            fieldset {
                min-width: 0;
                margin: 0 2px 0 0;
                padding: 2px 5px 4px 4px;
                border: 1px solid #d0d0bf;
                border-radius: 4px;
            }
            legend { padding: 0 2px; margin-left: 1px; color: #0046d5; }
            .grid { display: grid; grid-template-columns: repeat(3, minmax(0, 1fr)); gap: 3px; }
            footer { display: flex; justify-content: flex-end; gap: 15px; padding-top: 12px; }
            footer button {
                width: 72px;
                height: 23px;
                padding: 0;
                border: 1px solid #003c74;
                border-radius: 3px;
                background: linear-gradient(#fff, #ecebe5 85%, #d6d0c5);
            }
            .ok { box-shadow: inset 0 0 0 2px #a8c4f0; }
        `, `
            <fieldset>
                <legend>图形</legend>
                <div class="grid">
                    ${SHAPES.map((s, i) => `<shape-card index="${i}" ${i === 0 ? 'selected' : ''}></shape-card>`).join('')}
                </div>
            </fieldset>
            <footer>
                <button type="button" class="ok">确定</button>
                <button type="button">取消</button>
            </footer>
        `);
    }
}

customElements.define('ui-icon', UiIcon);
customElements.define('app-workspace', AppWorkspace);
customElements.define('side-panel', SidePanel);
customElements.define('nav-button', NavButton);
customElements.define('tree-tools', TreeTools);
customElements.define('list-tools', ListTools);
customElements.define('tree-view', TreeView);
customElements.define('tree-item', TreeItem);
customElements.define('tool-button', ToolButton);
customElements.define('combo-box', ComboBox);
customElements.define('main-toolbars', MainToolbars);
customElements.define('model-view', ModelView);
customElements.define('float-window', FloatWindow);
customElements.define('property-grid', PropertyGrid);
customElements.define('section-preview', SectionPreview);
customElements.define('check-list', CheckList);
customElements.define('check-row', CheckRow);
customElements.define('shape-card', ShapeCard);
customElements.define('shape-picker', ShapePicker);
</script>
</body>
</html>
